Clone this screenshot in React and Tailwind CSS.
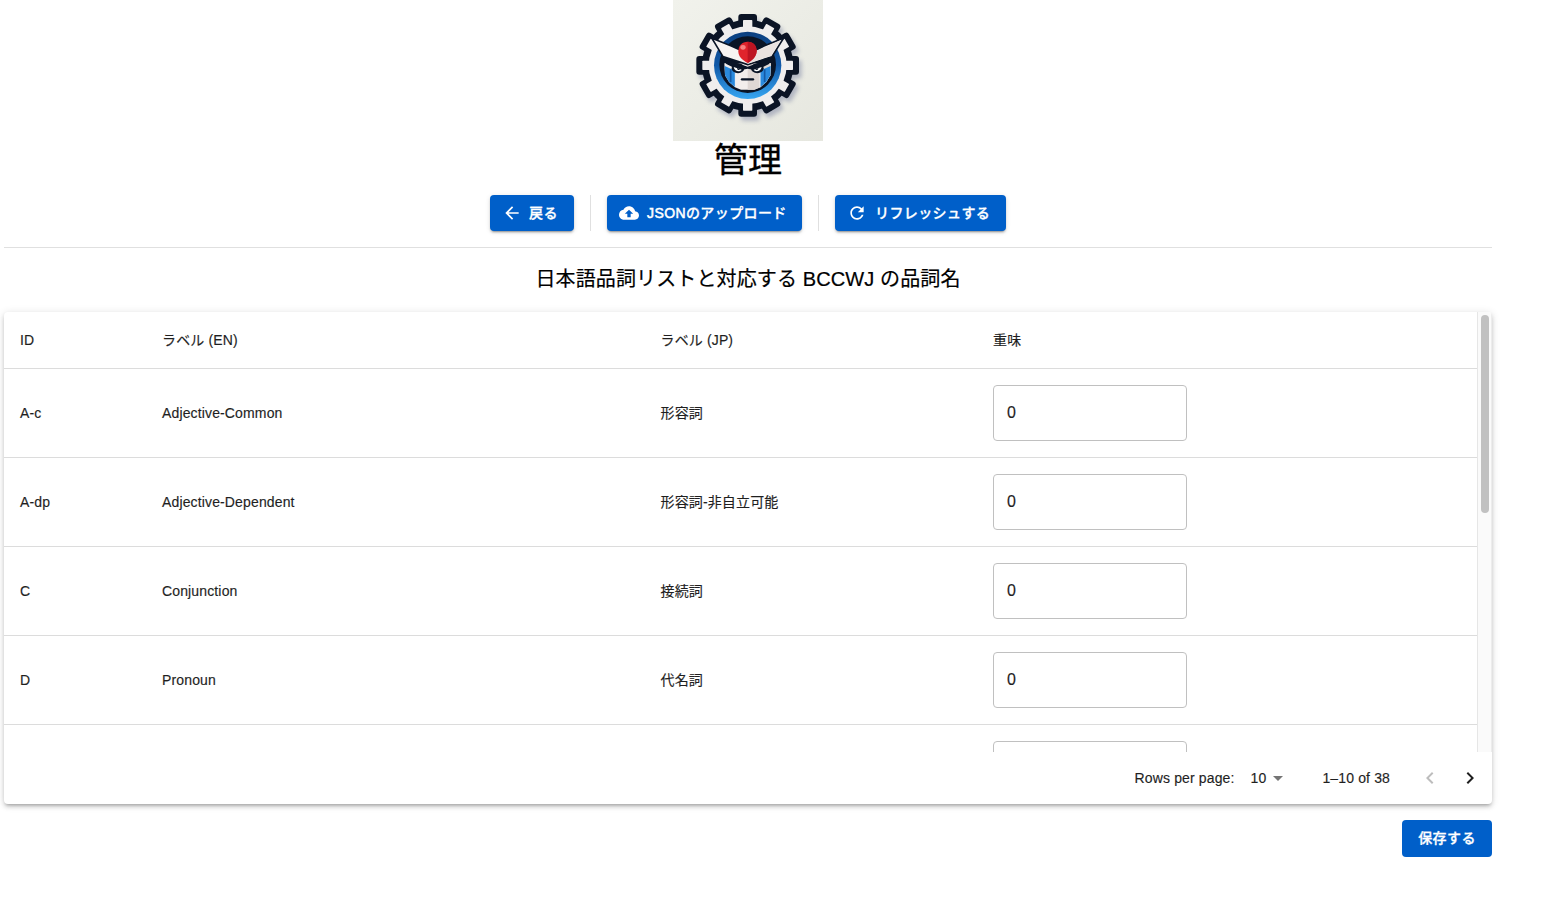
import React from "react";

const FONT = "font-['Liberation_Sans','Noto_Sans_CJK_JP',sans-serif]";

const rows = [
  { id: "A-c", en: "Adjective-Common", jp: "形容詞", weight: "0" },
  { id: "A-dp", en: "Adjective-Dependent", jp: "形容詞-非自立可能", weight: "0" },
  { id: "C", en: "Conjunction", jp: "接続詞", weight: "0" },
  { id: "D", en: "Pronoun", jp: "代名詞", weight: "0" },
  { id: "", en: "", jp: "", weight: "" },
];

const angles = [0, 30, 60, 90, 120, 150, 180, 210, 240, 270, 300, 330];

const icons = {
  back: "M20 11H7.83l5.59-5.59L12 4l-8 8 8 8 1.41-1.41L7.83 13H20z",
  upload:
    "M19.35 10.04C18.67 6.59 15.64 4 12 4 9.11 4 6.6 5.64 5.35 8.04 2.34 8.36 0 10.91 0 14c0 3.31 2.69 6 6 6h13c2.76 0 5-2.24 5-5 0-2.64-2.05-4.78-4.65-4.96M14 13v4h-4v-4H7l5-5 5 5z",
  refresh:
    "M17.65 6.35C16.2 4.9 14.21 4 12 4c-4.42 0-7.99 3.58-7.99 8s3.57 8 7.99 8c3.73 0 6.84-2.55 7.73-6h-2.08c-.82 2.33-3.04 4-5.65 4-3.31 0-6-2.69-6-6s2.69-6 6-6c1.66 0 3.14.69 4.22 1.78L13 11h7V4z",
  left: "M15.41 7.41 14 6l-6 6 6 6 1.41-1.41L10.83 12z",
  right: "M10 6 8.59 7.41 13.17 12l-4.58 4.59L10 18l6-6z",
  down: "m7 10 5 5 5-5z",
};

function Icon({ name, className }) {
  return (
    <svg viewBox="0 0 24 24" className={className} fill="currentColor" aria-hidden="true">
      <path d={icons[name]} />
    </svg>
  );
}

function Gear({ fill, tip, half, root, radius }) {
  return (
    <g fill={fill}>
      <circle cx="224" cy="196" r={root} />
      {angles.map((a) => (
        <rect
          key={a}
          x={224 - half}
          y={196 - tip}
          width={half * 2}
          height={60}
          rx={radius}
          transform={`rotate(${a} 224 196)`}
        />
      ))}
    </g>
  );
}

function Logo() {
  return (
    <svg viewBox="0 0 450 423" className="block h-[141px] w-[150px]" aria-hidden="true">
      <defs>
        <linearGradient id="paper" x1="0" y1="0" x2="1" y2="1">
          <stop offset="0" stopColor="#f1f2ec" />
          <stop offset="1" stopColor="#e6e7df" />
        </linearGradient>
        <linearGradient id="ring" x1="0" y1="0" x2="0" y2="1">
          <stop offset="0" stopColor="#0c3f80" />
          <stop offset="0.5" stopColor="#1259a8" />
          <stop offset="1" stopColor="#37a6f2" />
        </linearGradient>
        <filter id="soft" x="-20%" y="-20%" width="140%" height="140%">
          <feGaussianBlur stdDeviation="7" />
        </filter>
      </defs>
      <rect width="450" height="423" fill="url(#paper)" />
      <g filter="url(#soft)" opacity="0.4" transform="translate(8 12)">
        <Gear fill="#5d6690" tip={154} half={28} root={134} radius={8} />
      </g>
      <Gear fill="#0b1425" tip={154} half={28} root={137} radius={9} />
      <Gear fill="#f0eeee" tip={136} half={14} root={0} radius={2} />
      <circle cx="224" cy="196" r="117" fill="#f0eeee" />
      <circle cx="224" cy="196" r="101" fill="url(#ring)" />
      <circle cx="224" cy="194" r="85" fill="#0a1426" />
      <path d="M154 190H294L292 226 280 246 262 262 244 269H204L186 262 168 246 156 226z" fill="#f3eeec" />
      <path d="M224 190H294L292 226 280 246 262 262 244 269H224z" fill="#e0d8d5" />
      <path d="M155 198 187 212V262L168 246 156 226zM293 198 261 212V262L280 246 292 226z" fill="#2a8ade" />
      <path d="M173 208v38M275 208v38" stroke="#155aa6" strokeWidth="5" />
      <path d="M187 212v49M261 212v49" stroke="#f7f3f2" strokeWidth="3" />
      <path d="M150 174 224 200 297 174 288 192 270 201 244 210 224 206 204 210 178 201 160 192z" fill="#0a1426" />
      <ellipse cx="195" cy="205" rx="19" ry="15" fill="#0a1426" />
      <ellipse cx="253" cy="205" rx="19" ry="15" fill="#0a1426" />
      <path d="M182 201 206 209C202 216 185 216 182 201zM266 201 242 209C246 216 263 216 266 201z" fill="#fff" />
      <path d="M192 204 201 207C200 212 192 211 192 204zM256 204 247 207C248 212 256 211 256 204z" fill="#0a1426" />
      <path
        d="M117 115 175 138 200 149 224 128 250 149 273 138 332 114 297 170 224 194 150 170z"
        fill="#f7f3f2"
        stroke="#0a1426"
        strokeWidth="5"
        strokeLinejoin="miter"
      />
      <path d="M224 160 250 153 323 121 294 167 224 191z" fill="#e9e2e0" />
      <path d="M196 154C196 137 207 125 224 125S251 137 251 154C250 171 238 181 224 189 209 181 196 171 196 154z" fill="#e0242c" />
      <path d="M224 125C241 125 251 137 251 154 250 171 238 181 224 189z" fill="#bd1422" />
      <ellipse cx="210" cy="142" rx="8" ry="7" fill="#f78180" />
      <path d="M207 238h33" stroke="#0a1426" strokeWidth="7" strokeLinecap="round" />
    </svg>
  );
}

const buttonBase =
  "flex items-center rounded bg-[#005fc9] text-[14px] leading-[24.5px] font-medium tracking-[0.4px] whitespace-nowrap text-white [-webkit-text-stroke:0.3px_white]";
const raised =
  "shadow-[0_3px_1px_-2px_rgba(0,0,0,0.2),0_2px_2px_0_rgba(0,0,0,0.14),0_1px_5px_0_rgba(0,0,0,0.12)]";

const gridCols = "grid grid-cols-[142px_498.5px_332.5px_500px]";

export default function App() {
  return (
    <div className={`${FONT} h-[903px] w-[1563px] overflow-hidden bg-white text-[#1f1f1f]`}>
      <main className="ml-1 flex w-[1488px] flex-col">
        <header className="flex flex-col items-center">
          <Logo />
          <h1 className="h-[54px] text-[34px] leading-[39px] text-black [-webkit-text-stroke:0.4px_black]">管理</h1>
          <div className="flex h-9 gap-4">
            <button className={`${buttonBase} ${raised} w-[84px] pl-3`}>
              <Icon name="back" className="mr-[7px] size-5" />
              <span>戻る</span>
            </button>
            <div className="w-px bg-[#e0e0e0]" />
            <button className={`${buttonBase} ${raised} w-[195px] pl-3`}>
              <Icon name="upload" className="mr-2 size-5" />
              <span>
                <span className="[-webkit-text-stroke:0.5px_white]">JSON</span>のアップロード
              </span>
            </button>
            <div className="w-px bg-[#e0e0e0]" />
            <button className={`${buttonBase} ${raised} w-[171px] pl-3`}>
              <Icon name="refresh" className="mr-2 size-5" />
              <span>リフレッシュする</span>
            </button>
          </div>
        </header>
        <div className="mt-4 h-px bg-[#e0e0e0]" />
        <h2 className="mt-[15px] h-8 text-center text-[20px] leading-8 tracking-[0.12px] text-black [-webkit-text-stroke:0.2px_black]">
          日本語品詞リストと対応する BCCWJ の品詞名
        </h2>

        <section className="mt-[17px] h-[492px] overflow-hidden rounded bg-white text-[14px] tracking-[0.14px] [-webkit-text-stroke:0.15px_#1f1f1f] shadow-[0_3px_3px_-2px_rgba(0,0,0,0.2),0_3px_4px_0_rgba(0,0,0,0.14),0_1px_8px_0_rgba(0,0,0,0.12)]">
          <div className="flex h-[440px] overflow-hidden">
            <div className="w-[1473px]">
              <div className={`${gridCols} h-[57px] items-center border-b border-[#dcdcdc]`}>
                <div className="pl-4">ID</div>
                <div className="pl-4">ラベル (EN)</div>
                <div className="pl-4">ラベル (JP)</div>
                <div className="pl-4">重味</div>
              </div>
              {rows.map((r, i) => (
                <div key={i} className={`${gridCols} h-[89px] items-center border-b border-[#dcdcdc]`}>
                  <div className="pl-4">{r.id}</div>
                  <div className="pl-4">{r.en}</div>
                  <div className="pl-4">{r.jp}</div>
                  <div className="pl-4">
                    <div className="flex h-14 w-[194px] items-center rounded border border-[#c0c0c0] pl-[13px] text-[16px]">
                      {r.weight}
                    </div>
                  </div>
                </div>
              ))}
            </div>
            <div className="flex w-[15px] justify-center border-x border-l-[#e6e6e6] border-r-[#ececec] bg-[#fafafa] pt-[3px]">
              <div className="h-[198px] w-2 rounded-full bg-[#c1c1c1]" />
            </div>
          </div>
          <div className="flex h-[52px] items-center justify-end pr-[10px]">
            <span>Rows per page:</span>
            <span className="ml-4">10</span>
            <Icon name="down" className="size-6 text-[#757575]" />
            <span className="ml-8">1–10 of 38</span>
            <Icon name="left" className="ml-[28px] size-6 text-[#bdbdbd]" />
            <Icon name="right" className="ml-4 size-6 text-[#1f1f1f]" />
          </div>
        </section>

        <button className={`${buttonBase} mt-4 h-[37px] w-[90px] justify-center self-end pb-px`}>保存する</button>
      </main>
    </div>
  );
}
